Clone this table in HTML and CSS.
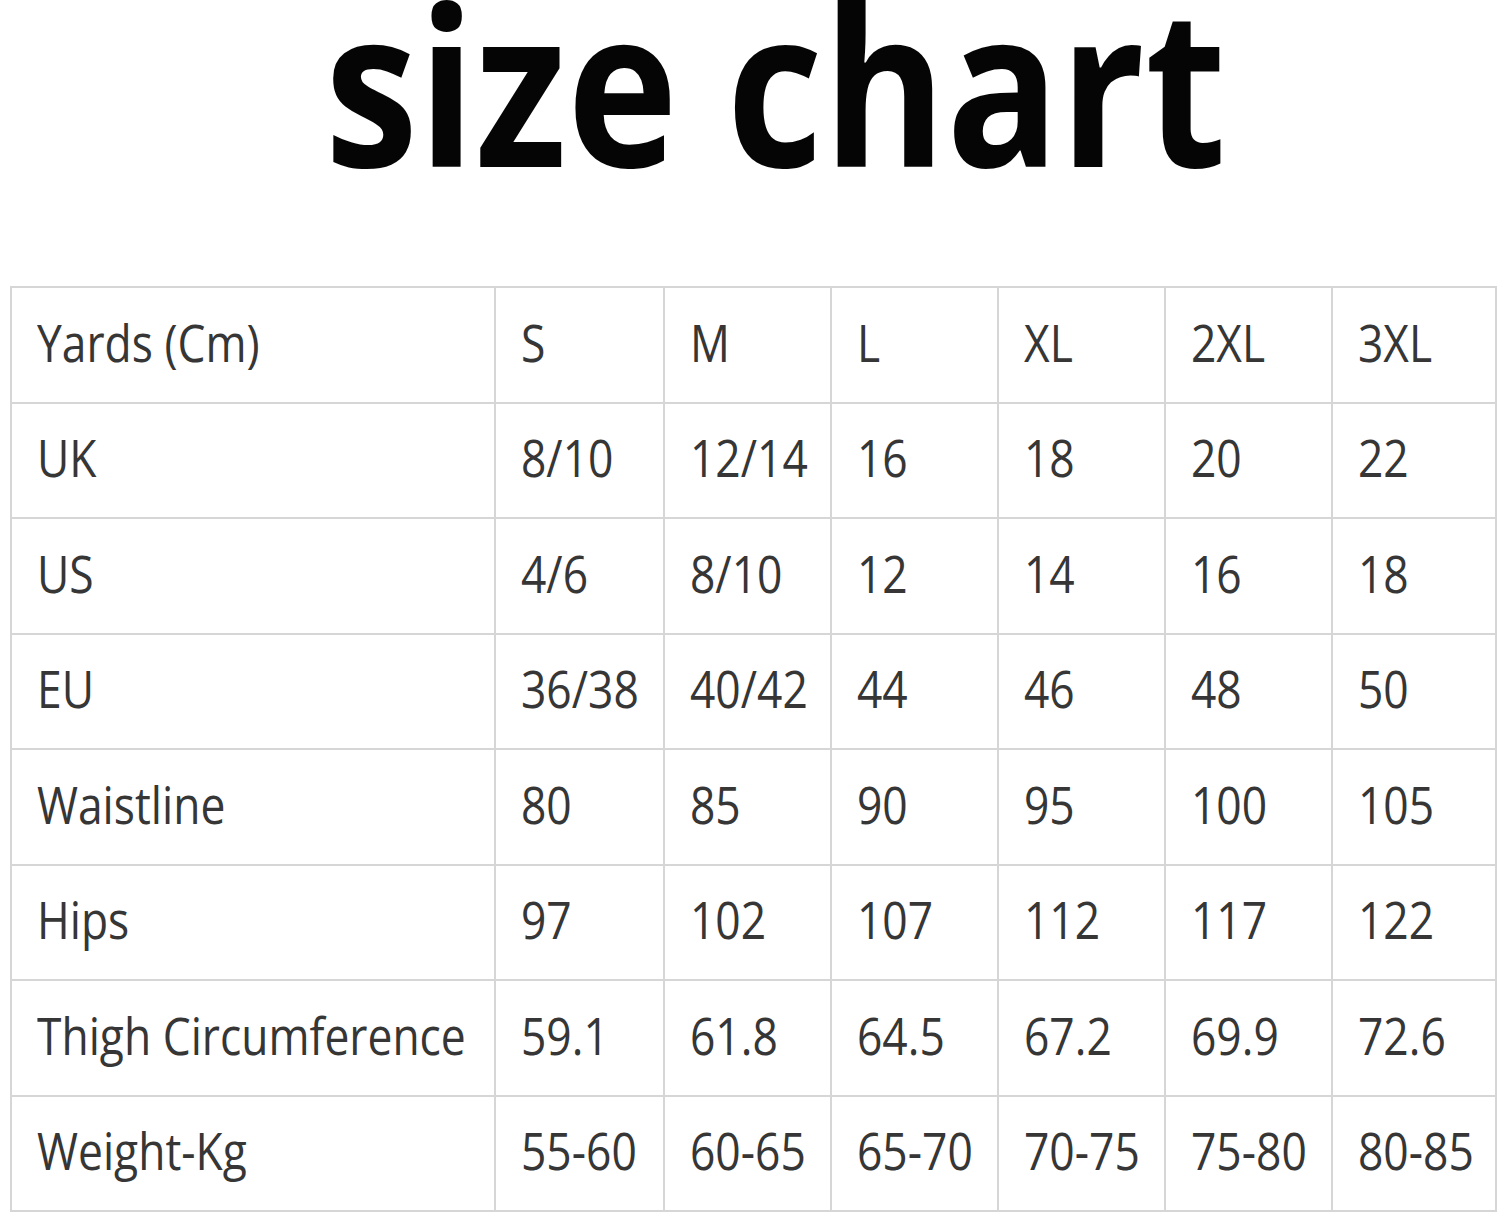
FILE: index.html
```html
<!DOCTYPE html>
<html>
<head>
<meta charset="utf-8">
<link rel="stylesheet" href="styles.css">
</head>
<body>
<h1 class="title">size chart</h1>
<table class="chart">
  <colgroup>
    <col class="c-label"><col class="c-s"><col class="c-m"><col class="c-m"><col class="c-m"><col class="c-m"><col class="c-last">
  </colgroup>
  <tr><td><span>Yards (Cm)</span></td><td><span>S</span></td><td><span>M</span></td><td><span>L</span></td><td><span>XL</span></td><td><span>2XL</span></td><td><span>3XL</span></td></tr>
  <tr><td><span>UK</span></td><td><span>8/10</span></td><td><span>12/14</span></td><td><span>16</span></td><td><span>18</span></td><td><span>20</span></td><td><span>22</span></td></tr>
  <tr><td><span>US</span></td><td><span>4/6</span></td><td><span>8/10</span></td><td><span>12</span></td><td><span>14</span></td><td><span>16</span></td><td><span>18</span></td></tr>
  <tr><td><span>EU</span></td><td><span>36/38</span></td><td><span>40/42</span></td><td><span>44</span></td><td><span>46</span></td><td><span>48</span></td><td><span>50</span></td></tr>
  <tr><td><span>Waistline</span></td><td><span>80</span></td><td><span>85</span></td><td><span>90</span></td><td><span>95</span></td><td><span>100</span></td><td><span>105</span></td></tr>
  <tr><td><span>Hips</span></td><td><span>97</span></td><td><span>102</span></td><td><span>107</span></td><td><span>112</span></td><td><span>117</span></td><td><span>122</span></td></tr>
  <tr><td><span>Thigh Circumference</span></td><td><span>59.1</span></td><td><span>61.8</span></td><td><span>64.5</span></td><td><span>67.2</span></td><td><span>69.9</span></td><td><span>72.6</span></td></tr>
  <tr><td><span>Weight-Kg</span></td><td><span>55-60</span></td><td><span>60-65</span></td><td><span>65-70</span></td><td><span>70-75</span></td><td><span>75-80</span></td><td><span>80-85</span></td></tr>
</table>
</body>
</html>
```
FILE: styles.css
```css
html, body {
  margin: 0;
  padding: 0;
  background: #ffffff;
}
.title {
  margin: 0 0 122px 0;
  padding-left: 60px;
  text-align: center;
  font-family: "Open Sans", "Noto Sans", sans-serif;
  font-weight: 700;
  font-size: 220px;
  line-height: 164px;
  letter-spacing: 0;
  color: #050505;
  transform: scaleX(0.853);
}
.chart {
  margin-left: 10px;
  border-collapse: collapse;
  table-layout: fixed;
  width: 1485px;
}
.c-label { width: 484px; }
.c-s { width: 169px; }
.c-m { width: 167px; }
.c-last { width: 164px; }
.chart td {
  border: 2px solid #d6d6d6;
  height: 115.5px;
  padding: 0 0 6px 25px;
  box-sizing: border-box;
  font-family: "Open Sans", "Noto Sans", sans-serif;
  font-size: 51px;
  color: #363636;
  white-space: nowrap;
  vertical-align: middle;
}
.chart td span {
  display: inline-block;
  transform: scaleX(0.87);
  transform-origin: left center;
}
```
